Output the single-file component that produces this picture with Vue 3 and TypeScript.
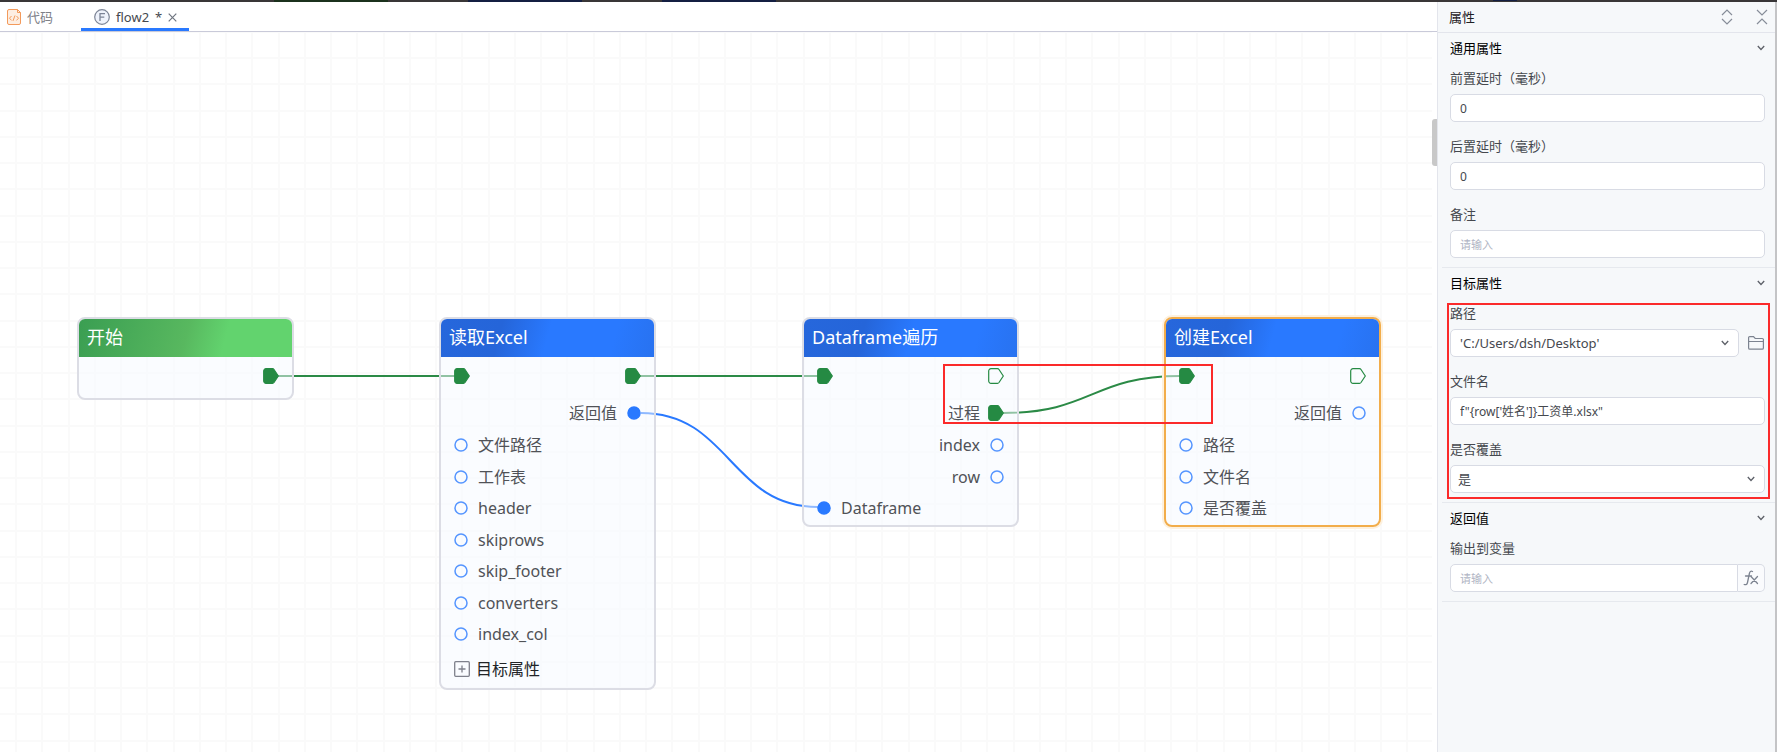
<script setup lang="ts">
import { reactive } from 'vue'

type PinKind = 'exec' | 'data'
interface Pin { kind: PinKind; label?: string; on?: boolean }
interface Row { left?: Pin; right?: Pin }
interface FlowNode {
  id: string
  title: string
  tone: 'green' | 'blue'
  x: number
  selected?: boolean
  rows: Row[]
  more?: string
}

const input = (label: string, on = false): Row => ({ left: { kind: 'data', label, on } })
const output = (label: string, on = false): Row => ({ right: { kind: 'data', label, on } })

const nodes: FlowNode[] = [
  { id: 'start', title: '开始', tone: 'green', x: 77, rows: [{ right: { kind: 'exec', on: true } }] },
  {
    id: 'read', title: '读取Excel', tone: 'blue', x: 439, more: '目标属性',
    rows: [
      { left: { kind: 'exec', on: true }, right: { kind: 'exec', on: true } },
      output('返回值', true),
      input('文件路径'), input('工作表'), input('header'), input('skiprows'),
      input('skip_footer'), input('converters'), input('index_col'),
    ],
  },
  {
    id: 'loop', title: 'Dataframe遍历', tone: 'blue', x: 802,
    rows: [
      { left: { kind: 'exec', on: true }, right: { kind: 'exec' } },
      { right: { kind: 'exec', label: '过程', on: true } },
      output('index'), output('row'), input('Dataframe', true),
    ],
  },
  {
    id: 'create', title: '创建Excel', tone: 'blue', x: 1164, selected: true,
    rows: [
      { left: { kind: 'exec', on: true }, right: { kind: 'exec' } },
      output('返回值'),
      input('路径'), input('文件名'), input('是否覆盖'),
    ],
  },
]

const form = reactive({
  before: '0',
  after: '0',
  note: '',
  path: "'C:/Users/dsh/Desktop'",
  file: 'f"{row[\'姓名\']}工资单.xlsx"',
  overwrite: '是',
  result: '',
})
</script>

<template>
  <div class="app">
    <div class="strip"><i class="s1"></i><i class="s2"></i><i class="s2"></i><i class="s3"></i></div>
    <div class="main">
      <section class="editor">
        <nav class="tabs">
          <button type="button" class="tab code">
            <svg width="14" height="16" viewBox="0 0 14 16" fill="none" stroke="#f39a5b" stroke-width="1">
              <path d="M2 .5h8.5l3 3v10.500a1.500 1.500 0 0 1-1.500 1.500H2A1.500 1.500 0 0 1 .5 14V2A1.500 1.500 0 0 1 2 .5z" fill="#fdeee2" />
              <path d="M10.500.5v3h3M4.500 7 2.500 9.200l2 2.200M9.500 7l2 2.200-2 2.200M8 6.500l-2 5.400" />
            </svg>
            <span>代码</span>
          </button>
          <button type="button" class="tab active">
            <svg width="16" height="16" viewBox="0 0 16 16" fill="none" stroke="#7c8496">
              <circle cx="8" cy="8" r="7.300" fill="#eef2fb" stroke-width="1.200" />
              <path d="M6 12V4.700h5M6 8.200h4.300" stroke-width="1.300" />
            </svg>
            <span>flow2</span>
            <span>*</span>
            <svg class="close" width="9" height="9" viewBox="0 0 9 9" fill="none" stroke="#6f7580" stroke-width="1.200"><path d="m.7.7 7.600 7.600M8.300.7.7 8.300" /></svg>
          </button>
        </nav>
        <div class="canvas">
          <svg class="layer grid" width="100%" height="100%">
            <defs>
              <pattern id="cells" x="15" y="25" width="105" height="105" patternUnits="userSpaceOnUse">
                <path d="M0 0h2v105h-2zM26 0h2v105h-2zM53 0h2v105h-2zM79 0h2v105h-2zM0 0h105v2h-105zM0 26h105v2h-105zM0 53h105v2h-105zM0 79h105v2h-105z" fill="#fafafa" />
              </pattern>
            </defs>
            <rect width="100%" height="100%" fill="url(#cells)" />
          </svg>
          <svg class="layer" width="100%" height="100%" fill="none" stroke-width="2">
            <path d="M278 344H456M640 344H818" stroke="#2b8a46" />
            <path d="M1003 381C1092 381 1092 344 1180 344" stroke="#2b8a46" />
            <path d="M641 381C730 381 730 475 818 475" stroke="#2979ff" />
          </svg>
          <article v-for="n in nodes" :key="n.id" class="node" :class="{ selected: n.selected }" :style="{ left: n.x + 'px' }">
            <header :class="n.tone">{{ n.title }}</header>
            <div class="rows">
              <div v-for="(r, i) in n.rows" :key="i" class="row">
                <template v-for="side in (['left', 'right'] as const)" :key="side">
                  <div v-if="r[side]" class="pin" :class="side">
                    <svg width="16" height="16" viewBox="0 0 16 16">
                      <path v-if="r[side]?.kind === 'exec'" d="M3 .7h6.500a2 2 0 0 1 1.500.8L15.300 8 11 14.500a2 2 0 0 1-1.500.8H3A2.300 2.300 0 0 1 .7 13V3A2.300 2.300 0 0 1 3 .7z" :fill="r[side]?.on ? '#258a43' : 'none'" stroke="#258a43" stroke-width="1.200" />
                      <circle v-else :cx="side === 'left' ? 7 : 9" cy="8" r="6" :fill="r[side]?.on ? '#2979ff' : 'none'" :stroke="r[side]?.on ? '#2979ff' : '#5595ff'" stroke-width="1.500" />
                    </svg>
                    <span v-if="r[side]?.label">{{ r[side]?.label }}</span>
                  </div>
                </template>
              </div>
            </div>
            <button v-if="n.more" type="button" class="more">
              <svg width="16" height="16" viewBox="0 0 16 16" fill="none" stroke="#7f818c" stroke-width="1.300"><rect x=".7" y=".7" width="14.600" height="14.600" rx="1" /><path d="M4.500 8h7M8 4.500v7" /></svg>
              <span>{{ n.more }}</span>
            </button>
          </article>
          <div class="mark mark-link"></div>
          <div class="thumb"></div>
        </div>
      </section>

      <aside class="panel">
        <header class="panel-head">
          <h2>属性</h2>
          <button type="button" aria-label="展开"><svg width="12" height="16" viewBox="0 0 12 16" fill="none" stroke="#878d99" stroke-width="1.200"><path d="m1 6 5-5 5 5M1 10l5 5 5-5" /></svg></button>
          <button type="button" aria-label="收起"><svg width="12" height="16" viewBox="0 0 12 16" fill="none" stroke="#878d99" stroke-width="1.200"><path d="m1 1 5 5 5-5M1 15l5-5 5 5" /></svg></button>
        </header>

        <section class="group">
          <h3>通用属性<svg class="chev" viewBox="0 0 8 6"><path d="m.8 1 3.200 3.500L7.200 1" /></svg></h3>
          <div class="field"><label for="before">前置延时（毫秒）</label><input id="before" v-model="form.before" class="box" type="text" /></div>
          <div class="field"><label for="after">后置延时（毫秒）</label><input id="after" v-model="form.after" class="box" type="text" /></div>
          <div class="field"><label for="note">备注</label><input id="note" v-model="form.note" class="box" type="text" placeholder="请输入" /></div>
        </section>

        <section class="group">
          <h3>目标属性<svg class="chev" viewBox="0 0 8 6"><path d="m.8 1 3.200 3.500L7.200 1" /></svg></h3>
          <div class="field">
            <label for="path">路径</label>
            <div class="line">
              <div class="select">
                <select id="path" v-model="form.path" class="box path"><option>'C:/Users/dsh/Desktop'</option></select>
                <svg class="chev" viewBox="0 0 8 6"><path d="m.8 1 3.200 3.500L7.200 1" /></svg>
              </div>
              <button type="button" class="folder" aria-label="浏览">
                <svg width="16" height="14" viewBox="0 0 16 14" fill="none" stroke="#7c8390" stroke-width="1.200"><path d="M.6 11.900V1.700A1.100 1.100 0 0 1 1.700.6h3.800l1.700 1.900h7.100a1.100 1.100 0 0 1 1.100 1.100v8.300a1.300 1.300 0 0 1-1.300 1.300H1.900a1.300 1.300 0 0 1-1.300-1.300zM.6 5.500h14.800" /></svg>
              </button>
            </div>
          </div>
          <div class="field"><label for="file">文件名</label><input id="file" v-model="form.file" class="box" type="text" /></div>
          <div class="field">
            <label for="overwrite">是否覆盖</label>
            <div class="select">
              <select id="overwrite" v-model="form.overwrite" class="box choice"><option>是</option><option>否</option></select>
              <svg class="chev" viewBox="0 0 8 6"><path d="m.8 1 3.200 3.500L7.200 1" /></svg>
            </div>
          </div>
          <div class="mark mark-form"></div>
        </section>

        <section class="group">
          <h3>返回值<svg class="chev" viewBox="0 0 8 6"><path d="m.8 1 3.200 3.500L7.200 1" /></svg></h3>
          <div class="field">
            <label for="result">输出到变量</label>
            <div class="joined">
              <input id="result" v-model="form.result" class="box" type="text" placeholder="请输入" />
              <button type="button" aria-label="表达式">
                <svg width="16" height="16" viewBox="0 0 16 16" fill="none" stroke="#7c8390" stroke-width="1.300" stroke-linecap="round"><path d="M9.500 1.500c-1.800-.8-2.700.2-3.100 2L4.500 12.500c-.4 1.900-1.500 2.600-3.300 2M2.500 6h6M8 6.500l6.500 7M14.500 6.500l-6.500 7" /></svg>
              </button>
            </div>
          </div>
        </section>
      </aside>
    </div>
  </div>
</template>

<style>
body {
  margin: 0;
  background: #fff;
}
</style>

<style scoped>
* {
  box-sizing: border-box;
}
.app {
  display: flex;
  flex-direction: column;
  min-height: 100vh;
  font: 13px/20px "Noto Sans", "Noto Sans CJK SC", sans-serif;
  color: #45484e;
}
.strip {
  display: flex;
  gap: 80px;
  height: 2px;
  padding: 0 260px 0 274px;
  background: #393637;
}
.strip i {
  width: 114px;
  height: 2px;
}
.s1 {
  background: #1b311d;
}
.s2 {
  background: #141f42;
}
.strip .s3 {
  width: 24px;
  height: 1px;
  margin-left: auto;
  background: #141f42;
}
.main {
  display: flex;
  flex: 1;
  border-right: 2px solid #c4c4c6;
}
.editor {
  display: flex;
  flex: 1;
  min-width: 0;
  flex-direction: column;
}
button {
  display: flex;
  align-items: center;
  margin: 0;
  padding: 0;
  border: 0;
  background: none;
  color: inherit;
  font: inherit;
}
.tabs {
  display: flex;
  height: 30px;
  border-bottom: 1px solid #c9cad9;
}
.tab {
  gap: 6px;
  height: 29px;
  border-bottom: 3px solid transparent;
  padding-top: 4px;
}
.code {
  width: 81px;
  padding-left: 7px;
  color: #7d8087;
}
.active {
  padding: 4px 12px 0 13px;
  border-color: #2979ff;
}
.canvas {
  position: relative;
  flex: 1;
  overflow: hidden;
}
.layer {
  position: absolute;
  inset: 0;
}
.grid {
  width: calc(100% - 5px);
}
.node {
  position: absolute;
  top: 285px;
  width: 217px;
  padding-bottom: 1px;
  border: 2px solid #dcdde5;
  border-radius: 8px;
  background: rgba(246, 249, 255, 0.5);
  font-size: 16px;
  color: #505257;
}
.selected {
  border-color: #f2ad4b;
  box-shadow: 0 0 0 2px #fdf1df;
}
.node header {
  height: 38px;
  padding-left: 8px;
  border-radius: 6px 6px 0 0;
  color: #fff;
  font-size: 18px;
  line-height: 36px;
}
.green {
  background: linear-gradient(105deg, #3a9e52 0%, #58b85f 50%, #62d36e 68%);
}
.blue {
  background: linear-gradient(105deg, #2667dc 0%, #2565d9 28%, #2979ff 50%, #2979ff 80%, #2872f0 100%);
}
.rows {
  display: flex;
  flex-direction: column;
}
.row {
  display: flex;
  align-items: center;
  height: 32px;
  padding: 0 13px;
}
.row:first-child {
  height: 38px;
  margin-bottom: 2px;
}
.row:nth-child(2n + 4) {
  height: 31px;
}
.pin {
  display: flex;
  align-items: center;
  gap: 8px;
}
.pin.right {
  flex-direction: row-reverse;
  margin-left: auto;
}
.more {
  gap: 6px;
  height: 37px;
  padding-left: 13px;
  color: #222427;
}
.mark {
  position: absolute;
  border: 2px solid #fb2a2a;
  pointer-events: none;
}
.mark-link {
  left: 943px;
  top: 332px;
  width: 270px;
  height: 60px;
}
.mark-form {
  inset: 35px 5px 3px 5px;
}
.thumb {
  position: absolute;
  right: 0;
  top: 87px;
  width: 5px;
  height: 47px;
  border-radius: 3px 0 0 3px;
  background: #c8c8c8;
}
.panel {
  width: 338px;
  border-left: 1px solid #e3e5ec;
  background: #f6f8fa;
}
.panel-head {
  display: flex;
  align-items: center;
  gap: 23px;
  height: 31px;
  padding: 0 7px 0 11px;
  border-bottom: 1px solid #e3e5ec;
}
h2,
h3 {
  margin: 0;
  font-size: 13px;
  font-weight: 400;
}
h2 {
  margin-right: auto;
  color: #1e2024;
}
.group {
  position: relative;
  margin-left: 4px;
  padding: 0 10px 9px 8px;
  border-bottom: 1px solid #e6e9ee;
}
h3 {
  display: flex;
  align-items: center;
  justify-content: space-between;
  height: 33px;
  padding-bottom: 3px;
  color: #000;
}
.chev {
  width: 8px;
  height: 6px;
  fill: none;
  stroke: #5d6068;
  stroke-width: 1.3;
}
.field + .field {
  margin-top: 12px;
}
label {
  display: block;
  margin-bottom: 4px;
  line-height: 24px;
}
.box {
  display: block;
  width: 100%;
  height: 28px;
  margin: 0;
  padding: 0 9px;
  border: 1px solid #d8dbe4;
  border-radius: 5px;
  outline: 0;
  background: #fff;
  color: #45484e;
  font: inherit;
  font-size: 12px;
  appearance: none;
}
.box::placeholder {
  color: #b0b5c4;
  font-size: 11px;
}
.select {
  position: relative;
  flex: 1;
}
.select .chev {
  position: absolute;
  right: 10px;
  top: 11px;
}
.box.path {
  font-size: 13px;
}
.box.choice {
  padding-left: 7px;
  font-size: 13px;
}
.line {
  display: flex;
  align-items: center;
  gap: 9px;
}
.folder {
  width: 17px;
}
.joined {
  display: flex;
}
.joined .box {
  flex: 1;
  min-width: 0;
  border-radius: 5px 0 0 5px;
}
.joined button {
  justify-content: center;
  width: 27px;
  border: 1px solid #d8dbe4;
  border-left: 0;
  border-radius: 0 5px 5px 0;
  background: #fafbfd;
}
</style>
